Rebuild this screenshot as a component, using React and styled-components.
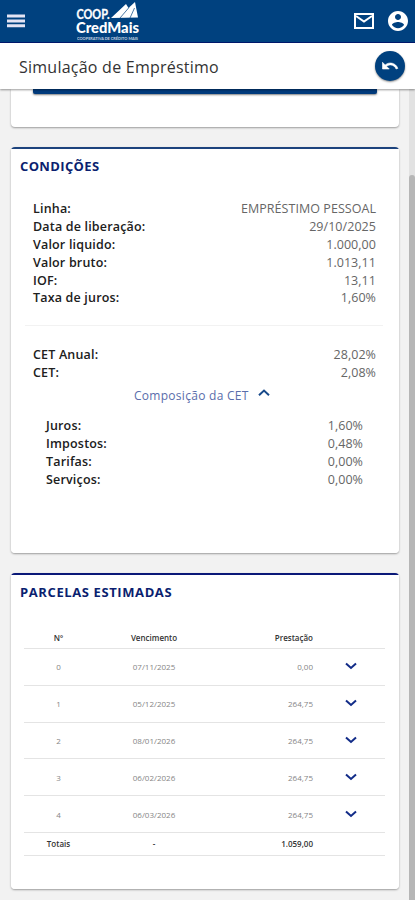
import React from "react";
import styled, { createGlobalStyle } from "styled-components";

const Global = createGlobalStyle`
  * { box-sizing: border-box; }
  html, body { margin: 0; height: 100%; overflow: hidden; }
  body { font-family: "Open Sans", "Noto Sans", sans-serif; background: #f2f2f2; color: #333; }
`;

const Screen = styled.div`
  width: 415px;
  height: 900px;
  display: flex;
  flex-direction: column;
  overflow: hidden;
`;

const Header = styled.header`
  height: 43px;
  flex: none;
  display: flex;
  align-items: flex-start;
  background: #00417f;
  border-bottom: 1px solid #00186d;
`;

const MenuButton = styled.div`
  width: 76px;
  padding: 14px 0 0 7px;
  svg { display: block; }
`;

const Logo = styled.svg`
  display: block;
  width: 66px;
  height: 42px;
  font-family: Lato, "Open Sans", sans-serif;
`;

const Actions = styled.div`
  flex: 1;
  display: flex;
  justify-content: flex-end;
  gap: 11px;
  padding: 9px 5px 0 0;
  svg { display: block; }
`;

const TitleBar = styled.div`
  height: 46px;
  flex: none;
  display: flex;
  align-items: center;
  justify-content: space-between;
  padding: 0 10px 0 19px;
  background: #fff;
  position: relative;
  box-shadow: 0 1px 2px rgba(0, 0, 0, 0.4);
`;

const Title = styled.h1`
  margin: 2px 0 0;
  font-size: 16px;
  font-weight: 400;
  line-height: 24px;
  letter-spacing: 0.24px;
  white-space: nowrap;
`;

const BackButton = styled.div`
  width: 30px;
  height: 30px;
  border-radius: 50%;
  background: #00417f;
  display: flex;
  align-items: center;
  justify-content: center;
  box-shadow: 0 1px 2px rgba(0, 0, 0, 0.45);
`;

const Body = styled.main`
  flex: 1;
  display: flex;
  min-height: 0;
`;

const Content = styled.div`
  flex: 1;
  padding: 0 10px 0 11px;
  display: flex;
  flex-direction: column;
  gap: 20px;
`;

const ScrollTrack = styled.div`
  width: 6px;
  padding-top: 86px;
  background: #e2e2e2;
`;

const ScrollThumb = styled.div`
  height: 100%;
  background: #b6b6b6;
  border-radius: 3px 3px 0 0;
`;

const Card = styled.section`
  flex: none;
  height: ${(p) => p.$height}px;
  background: linear-gradient(${(p) => p.$accent} 2px, #fff 2px);
  border-radius: 4px;
  padding-top: 3px;
  box-shadow: 0 1px 2px rgba(0, 0, 0, 0.36);
`;

const CardTail = styled.section`
  flex: none;
  height: 38px;
  padding: 0 22px;
  background: #fff;
  border-radius: 0 0 4px 4px;
  box-shadow: 0 1px 2px rgba(0, 0, 0, 0.36);
`;

const ButtonEdge = styled.div`
  height: 5px;
  background: #003a7c;
  border-radius: 0 0 2px 2px;
  box-shadow: 0 1px 2px rgba(0, 0, 0, 0.5);
`;

const CardTitle = styled.h2`
  margin: 0;
  padding: 7px 0 0 9px;
  font-size: 13px;
  line-height: 18px;
  font-weight: 700;
  letter-spacing: ${(p) => p.$spacing}px;
  color: #0b1f70;
`;

const List = styled.dl`
  margin: ${(p) => p.$top}px ${(p) => p.$inset + 1}px 0 ${(p) => p.$inset}px;
`;

const Row = styled.div`
  height: 17.9px;
  display: flex;
  justify-content: space-between;
  font-size: 12.5px;
  line-height: 18px;
  white-space: nowrap;
`;

const Term = styled.dt`
  font-weight: 600;
  color: #202020;
  letter-spacing: 0.18px;
`;

const Value = styled.dd`
  margin: 0;
  color: #666;
  letter-spacing: 0.05px;
`;

const Divider = styled.div`
  height: 1px;
  margin: 18px 16px 0 14px;
  background: #f2f2f2;
`;

const Toggle = styled.div`
  display: flex;
  align-items: center;
  gap: 9px;
  margin: 4px 0 0 123px;
  height: 18px;
  font-size: 12px;
  letter-spacing: 0.28px;
  color: #5a6dab;
  svg { margin-top: -4px; }
`;

const Table = styled.div`
  margin: 25px 14px 0 13px;
`;

const TableRow = styled.div`
  height: ${(p) => p.$height}px;
  display: grid;
  grid-template-columns: 69px 122px 98px 1fr;
  align-items: center;
  border-bottom: 1px solid #e4e4e4;
  font-size: 8px;
  line-height: 12px;
  padding-top: 1px;
  font-weight: ${(p) => (p.$strong ? 600 : 400)};
  color: ${(p) => (p.$strong ? "#333" : "#858585")};
`;

const Cell = styled.span`
  text-align: ${(p) => p.$align || "center"};
  svg { display: block; margin: -2px 0 0 32px; }
`;

const Chevron = ({ up, color }) => (
  <svg width="12" height="8" viewBox="0 0 12 8" fill="none" stroke={color} strokeWidth="2">
    <path d={up ? "M1 6.2 6 1.6l5 4.6" : "M1 1.4 6 6l5-4.6"} />
  </svg>
);

const conditions = [
  ["Linha:", "EMPRÉSTIMO PESSOAL"],
  ["Data de liberação:", "29/10/2025"],
  ["Valor liquido:", "1.000,00"],
  ["Valor bruto:", "1.013,11"],
  ["IOF:", "13,11"],
  ["Taxa de juros:", "1,60%"],
];
const cet = [["CET Anual:", "28,02%"], ["CET:", "2,08%"]];
const composition = [
  ["Juros:", "1,60%"],
  ["Impostos:", "0,48%"],
  ["Tarifas:", "0,00%"],
  ["Serviços:", "0,00%"],
];
const installments = [
  ["0", "07/11/2025", "0,00"],
  ["1", "05/12/2025", "264,75"],
  ["2", "08/01/2026", "264,75"],
  ["3", "06/02/2026", "264,75"],
  ["4", "06/03/2026", "264,75"],
];

const Details = ({ rows, top, inset }) => (
  <List $top={top} $inset={inset}>
    {rows.map(([term, value]) => (
      <Row key={term}>
        <Term>{term}</Term>
        <Value>{value}</Value>
      </Row>
    ))}
  </List>
);

export default function App() {
  return (
    <Screen>
      <Global />
      <Header>
        <MenuButton>
          <svg width="18" height="14" viewBox="0 0 18 14" fill="#e4e4f4">
            <path d="M0 .5h18v3H0zM0 5.500h18v3H0zM0 10.300h18v3H0z" />
          </svg>
        </MenuButton>
        <Logo viewBox="0 0 66 42" fill="#fff">
          <text x="0.5" y="18.800" fontSize="13" fontWeight="700" stroke="#fff" strokeWidth=".3" textLength="33" lengthAdjust="spacingAndGlyphs">COOP.</text>
          <path d="M35 18 50 4 52.500 8 59 2 62 17.500z" />
          <path d="M44 18 53 7.500M54 18l4.500-10" fill="none" stroke="#00417f" strokeWidth=".7" />
          <text x="0" y="33.300" fontSize="14.500" fontWeight="900" textLength="63" lengthAdjust="spacingAndGlyphs">CredMais</text>
          <text x="1" y="39.800" fontSize="3.500" fontWeight="700" opacity=".75" textLength="61" lengthAdjust="spacingAndGlyphs">COOPERATIVA DE CRÉDITO MAIS</text>
        </Logo>
        <Actions>
          <svg width="22" height="24" viewBox="0 0 22 24" fill="none" stroke="#fff" strokeWidth="2">
            <path d="M2 5h18v14H2z" />
            <path d="m3 7 8 5.500L19 7" />
          </svg>
          <svg width="24" height="24" viewBox="0 0 24 24" fill="#fff">
            <path d="M12 2C6.480 2 2 6.480 2 12s4.480 10 10 10 10-4.480 10-10S17.520 2 12 2zm0 3c1.660 0 3 1.340 3 3s-1.340 3-3 3-3-1.340-3-3 1.340-3 3-3zm0 14.200c-2.500 0-4.710-1.280-6-3.220.03-1.990 4-3.080 6-3.080 1.990 0 5.970 1.090 6 3.080-1.290 1.940-3.500 3.220-6 3.220z" />
          </svg>
        </Actions>
      </Header>
      <TitleBar>
        <Title>Simulação de Empréstimo</Title>
        <BackButton>
          <svg width="18" height="18" viewBox="0 0 24 24" fill="#fff" stroke="#fff" strokeWidth=".8">
            <path d="M12.500 8c-2.650 0-5.050.99-6.900 2.600L2 7v9h9l-3.620-3.620c1.390-1.160 3.160-1.880 5.120-1.880 3.540 0 6.550 2.310 7.600 5.500l2.370-.78C21.080 11.030 17.150 8 12.500 8z" />
          </svg>
        </BackButton>
      </TitleBar>
      <Body>
        <Content>
          <CardTail>
            <ButtonEdge />
          </CardTail>
          <Card $height={406} $accent="#1d437d">
            <CardTitle $spacing={0.36}>CONDIÇÕES</CardTitle>
            <Details rows={conditions} top={25} inset={22} />
            <Divider />
            <Details rows={cet} top={20} inset={22} />
            <Toggle>
              Composição da CET
              <Chevron up color="#17498a" />
            </Toggle>
            <Details rows={composition} top={13} inset={35} />
          </Card>
          <Card $height={316} $accent="#0a1878">
            <CardTitle $spacing={0.6}>PARCELAS ESTIMADAS</CardTitle>
            <Table>
              <TableRow $height={23} $strong>
                <Cell>Nº</Cell>
                <Cell>Vencimento</Cell>
                <Cell $align="right">Prestação</Cell>
              </TableRow>
              {installments.map(([number, date, amount]) => (
                <TableRow key={number} $height={36.8}>
                  <Cell>{number}</Cell>
                  <Cell>{date}</Cell>
                  <Cell $align="right">{amount}</Cell>
                  <Cell $align="left"><Chevron color="#122c88" /></Cell>
                </TableRow>
              ))}
              <TableRow $height={23} $strong>
                <Cell>Totais</Cell>
                <Cell>-</Cell>
                <Cell $align="right">1.059,00</Cell>
              </TableRow>
            </Table>
          </Card>
        </Content>
        <ScrollTrack>
          <ScrollThumb />
        </ScrollTrack>
      </Body>
    </Screen>
  );
}
